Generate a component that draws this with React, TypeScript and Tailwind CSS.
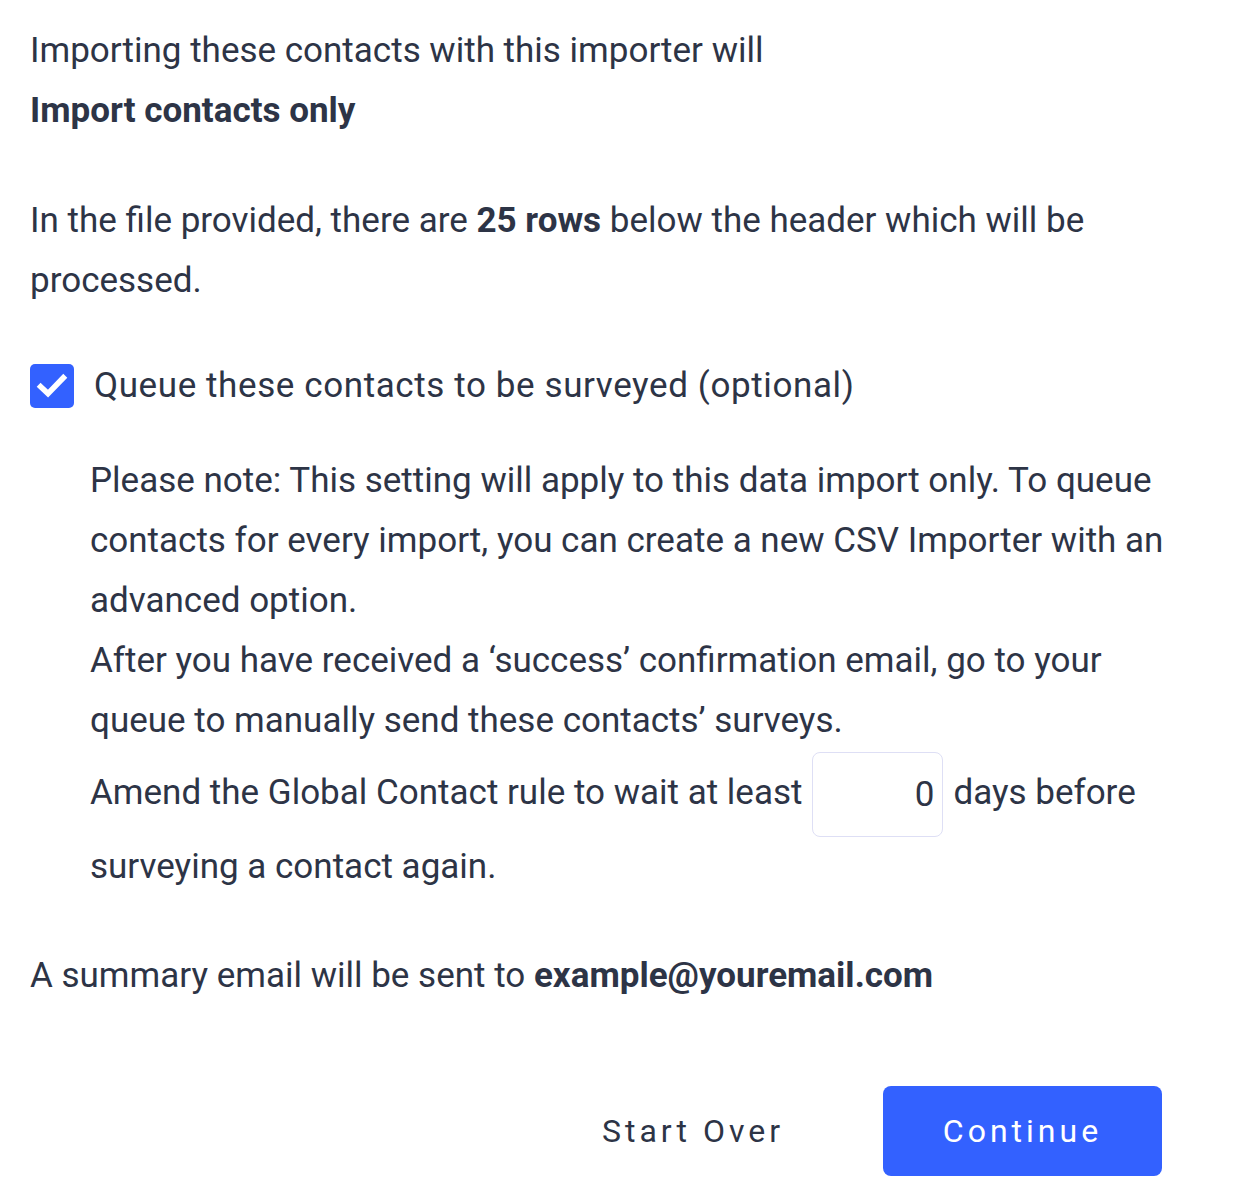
import React, { useState } from 'react';

export default function App() {
  const [queued, setQueued] = useState(true);
  const [days, setDays] = useState('0');

  return (
    <div className="min-h-screen bg-white text-[#2d3446] text-[35px] leading-[60px] font-['Roboto',sans-serif] pt-[21px] px-[30px]">
      <p>Importing these contacts with this importer will</p>
      <p className="font-bold">Import contacts only</p>

      <p className="mt-[50px] pr-[60px]">
        In the file provided, there are <span className="font-bold">25 rows</span> below the header which will be processed.
      </p>

      {/* Survey queue option */}
      <label className="mt-[45px] flex items-center gap-[20px] h-[60px] cursor-pointer">
        <input type="checkbox" className="sr-only" checked={queued} onChange={() => setQueued(!queued)} />
        <span className={`w-[44px] h-[44px] rounded-[5px] flex items-center justify-center ${queued ? 'bg-[#3361ff]' : 'border-2 border-[#c8cbe0] bg-white'}`}>
          {queued && (
            <svg width="32" height="32" viewBox="0 0 24 24" fill="none">
              <path d="M3.5 12.5l5.5 5.2L20.5 5.8" stroke="white" strokeWidth="4.2" strokeLinecap="square" />
            </svg>
          )}
        </span>
        <span className="tracking-[0.6px]">Queue these contacts to be surveyed (optional)</span>
      </label>

      <div className="mt-[35px] pl-[60px] pr-[50px]">
        <p>
          Please note: This setting will apply to this data import only. To queue contacts for every import, you can create a new CSV Importer with an advanced option.
        </p>
        <p>
          After you have received a ‘success’ confirmation email, go to your queue to manually send these contacts’ surveys.
        </p>
        <p className="pt-[1px]">
          Amend the Global Contact rule to wait at least
          <input
            value={days}
            onChange={e => setDays(e.target.value)}
            className="inline-block align-middle w-[131px] h-[85px] border border-[#dedff5] rounded-[8px] text-right pr-[8px] outline-none text-[#2d3446] mx-[10px]"
          />
          days before surveying a contact again.
        </p>
      </div>

      <p className="mt-[49px]">
        A summary email will be sent to <span className="font-bold">example@youremail.com</span>
      </p>

      <div className="mt-[80px] mr-[52px] flex items-center justify-end gap-[99px] text-[32px]">
        <button className="tracking-[4px] text-[#2d3446]">Start Over</button>
        <button className="w-[279px] h-[90px] rounded-[8px] bg-[#3361ff] text-white tracking-[4px]">Continue</button>
      </div>
    </div>
  );
}
